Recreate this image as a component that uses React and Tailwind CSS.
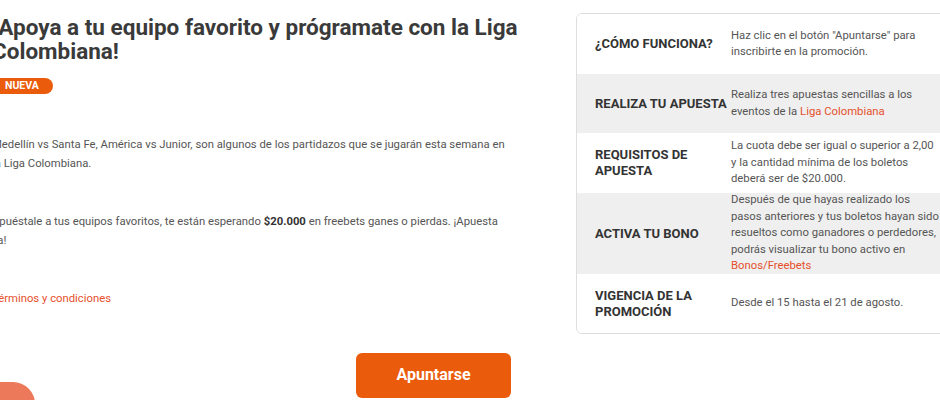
import React from 'react';

const rows = [
  {
    label: '¿CÓMO FUNCIONA?',
    value: <>Haz clic en el botón "Apuntarse" para inscribirte en la promoción.</>,
    h: 'h-[60px]',
  },
  {
    label: 'REALIZA TU APUESTA',
    value: <>Realiza tres apuestas sencillas a los eventos de la <span className="text-[#e5502c]">Liga Colombiana</span></>,
    h: 'h-[59px]',
    gray: true,
  },
  {
    label: 'REQUISITOS DE APUESTA',
    value: <>La cuota debe ser igual o superior a 2,00 y la cantidad mínima de los boletos deberá ser de $20.000.</>,
    h: 'h-[60px]',
  },
  {
    label: 'ACTIVA TU BONO',
    value: <>Después de que hayas realizado los pasos anteriores y tus boletos hayan sido resueltos como ganadores o perdedores, podrás visualizar tu bono activo en <span className="text-[#e5502c]">Bonos/Freebets</span></>,
    h: 'h-[81px]',
    gray: true,
  },
  {
    label: 'VIGENCIA DE LA PROMOCIÓN',
    value: <>Desde el 15 hasta el 21 de agosto.</>,
    h: 'h-[59px]',
  },
];

export default function App() {
  return (
    <div className="w-[940px] h-[400px] overflow-hidden bg-white font-['Roboto',sans-serif] flex">
      <div className="ml-[-8px] w-[521px] shrink-0 pt-[15px] flex flex-col">
        <h1 className="mr-[-12px] text-[22.5px] leading-[24px] font-bold text-[#3a3a3a]">
          ¡Apoya a tu equipo favorito y prógramate con la Liga Colombiana!
        </h1>
        <span className="mt-[15px] self-start h-[18px] pl-[13px] pr-[14px] rounded-full bg-[#ea5b0c] text-white text-[10.5px] font-bold flex items-center">
          NUEVA
        </span>
        <p className="mt-[41px] text-[11.3px] leading-[19px] text-[#555]">
          Medellín vs Santa Fe, América vs Junior, son algunos de los partidazos que se jugarán esta semana en la Liga Colombiana.
        </p>
        <p className="mt-[39px] text-[11.3px] leading-[19px] text-[#555]">
          Apuéstale a tus equipos favoritos, te están esperando <b className="text-[#333]">$20.000</b> en freebets ganes o pierdas. ¡Apuesta ya!
        </p>
        <a className="mt-[39px] text-[11.3px] leading-[19px] text-[#e5502c]">Términos y condiciones</a>
        <div className="mt-[45px] flex justify-between items-start mr-[2px]">
          <button className="mt-[29px] h-[44px] w-[43px] rounded-tr-[22px] rounded-br-[22px] bg-[#ec7a5a] text-white text-[13px] font-bold flex items-end justify-end pr-[6px] overflow-hidden">
            <span className="mb-[-8px]">la</span>
          </button>
          <button className="w-[155px] h-[45px] rounded-md bg-[#ea5b0c] text-white text-[16px] font-bold">
            Apuntarse
          </button>
        </div>
      </div>
      <div className="ml-[63px] mt-[13px] self-start w-[400px] shrink-0 border border-[#dedede] rounded-md overflow-hidden">
        {rows.map((r) => (
          <div key={r.label} className={`flex items-center ${r.h} ${r.gray ? 'bg-[#efefef]' : 'bg-white'}`}>
            <div className="w-[154px] shrink-0 pl-[18px] pr-[2px] text-[13px] leading-[16px] font-bold text-[#333]">
              {r.label}
            </div>
            <div className="w-[208px] text-[11.3px] leading-[16.5px] text-[#555]">{r.value}</div>
          </div>
        ))}
      </div>
    </div>
  );
}
